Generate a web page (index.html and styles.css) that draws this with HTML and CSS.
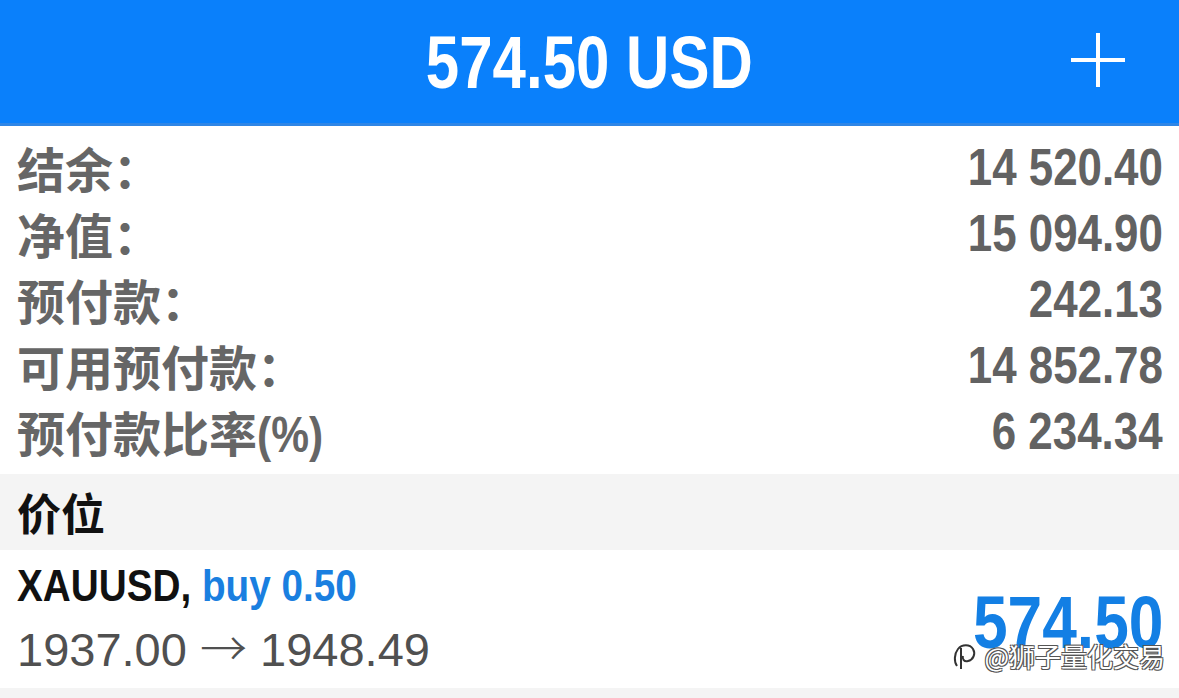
FILE: index.html
```html
<!DOCTYPE html>
<html lang="zh-CN">
  <head>
    <meta charset="UTF-8">
    <meta name="viewport" content="width=device-width, initial-scale=1.0">
    <title>交易 - 574.50 USD</title>
    <link rel="stylesheet" href="styles.css">
  </head>
  <body>
    <!-- Top bar -->
    <header class="topbar">
      <h1 class="topbar-title">574.50 USD</h1>
      <button class="topbar-add" aria-label="新订单">
        <svg width="54" height="54" viewBox="0 0 54 54">
          <path d="M27 0V54M0 27H54" stroke="#fff" stroke-width="4" fill="none"/>
        </svg>
      </button>
    </header>

    <!-- Account summary -->
    <ul class="summary">
      <li class="summary-row"><span class="label">结余：</span><span class="value">14 520.40</span></li>
      <li class="summary-row"><span class="label">净值：</span><span class="value">15 094.90</span></li>
      <li class="summary-row"><span class="label">预付款：</span><span class="value">242.13</span></li>
      <li class="summary-row"><span class="label">可用预付款：</span><span class="value">14 852.78</span></li>
      <li class="summary-row"><span class="label">预付款比率<span class="pct">(%)</span></span><span class="value">6 234.34</span></li>
    </ul>

    <!-- Positions -->
    <div class="section-head">价位</div>
    <div class="position">
      <div class="position-info">
        <div class="position-title">XAUUSD, <span class="side">buy 0.50</span></div>
        <div class="position-prices">1937.00 <span class="arrow">→</span> 1948.49</div>
      </div>
      <div class="position-profit">574.50</div>
      <div class="watermark">
        <svg width="26" height="30" viewBox="0 0 26 30">
          <path d="M5 25C2 21 2 13 6 8C10 3 18 3 21 8C24 13 21 19 16 20C12 21 10 18 11 15" stroke="#333" stroke-width="2" fill="none"/>
          <path d="M9 7L9 28" stroke="#333" stroke-width="2" fill="none"/>
        </svg>
        <span>@狮子量化交易</span>
      </div>
    </div>
    <div class="footer-strip"></div>
  </body>
</html>
```

FILE: styles.css
```css
/* General Styles */
body {
  margin: 0;
  padding: 0;
  background: #fff;
  font-family: "Liberation Sans", "Noto Sans CJK SC", sans-serif;
  overflow: hidden;
}

/* Top bar */
.topbar {
  position: relative;
  height: 123px;
  background: #0a80fb;
  border-bottom: 3px solid #2f86e6;
  display: flex;
  align-items: center;
  justify-content: center;
}

.topbar-title {
  margin: 0;
  color: #fff;
  font-size: 75px;
  font-weight: bold;
  transform: scaleX(0.8);
}

.topbar-add {
  position: absolute;
  right: 54px;
  top: 33px;
  padding: 0;
  border: 0;
  background: none;
  line-height: 0;
}

/* Account summary */
.summary {
  list-style: none;
  margin: 0;
  padding: 8px 16px 10px 17px;
}

.summary-row {
  height: 66px;
  display: flex;
  align-items: center;
  justify-content: space-between;
  color: #626262;
}

.label {
  font-family: "Noto Sans CJK SC", sans-serif;
  font-size: 48px;
  font-weight: bold;
  color: #666;
}

.pct {
  display: inline-block;
  font-family: "Liberation Sans", sans-serif;
  font-size: 50px;
  transform: scaleX(0.85);
  transform-origin: left;
}

.value {
  display: inline-block;
  font-size: 51px;
  font-weight: bold;
  transform: scaleX(0.86);
  transform-origin: right;
}

/* Positions */
.section-head {
  height: 76px;
  background: #f4f4f4;
  padding-left: 17px;
  display: flex;
  align-items: center;
  font-size: 44px;
  font-weight: bold;
  color: #111;
  font-family: "Noto Sans CJK SC", sans-serif;
}

.position {
  position: relative;
  height: 138px;
  padding: 0 16px 0 17px;
  display: flex;
  align-items: center;
  justify-content: space-between;
}

.position-title {
  font-size: 45px;
  font-weight: bold;
  color: #111;
  line-height: 58px;
  transform: scaleX(0.86);
  transform-origin: left;
}

.side {
  color: #1a7fe0;
}

.position-prices {
  font-size: 47px;
  color: #505050;
  line-height: 62px;
}

.arrow {
  font-family: "Noto Sans CJK SC", sans-serif;
  font-weight: 300;
}

.position-profit {
  font-size: 75px;
  font-weight: bold;
  color: #137fe4;
  margin-top: 6px;
  transform: scaleX(0.83);
  transform-origin: right;
}

.watermark {
  position: absolute;
  right: 14px;
  bottom: 14px;
  display: flex;
  align-items: center;
  gap: 6px;
  font-family: "Noto Sans CJK SC", sans-serif;
  font-size: 26px;
  color: #fff;
  text-shadow: -1px -1px 0 #555, 1px 1px 0 #555, 1px -1px 0 #555, -1px 1px 0 #555;
}

.footer-strip {
  height: 10px;
  background: #f4f4f4;
}
```
